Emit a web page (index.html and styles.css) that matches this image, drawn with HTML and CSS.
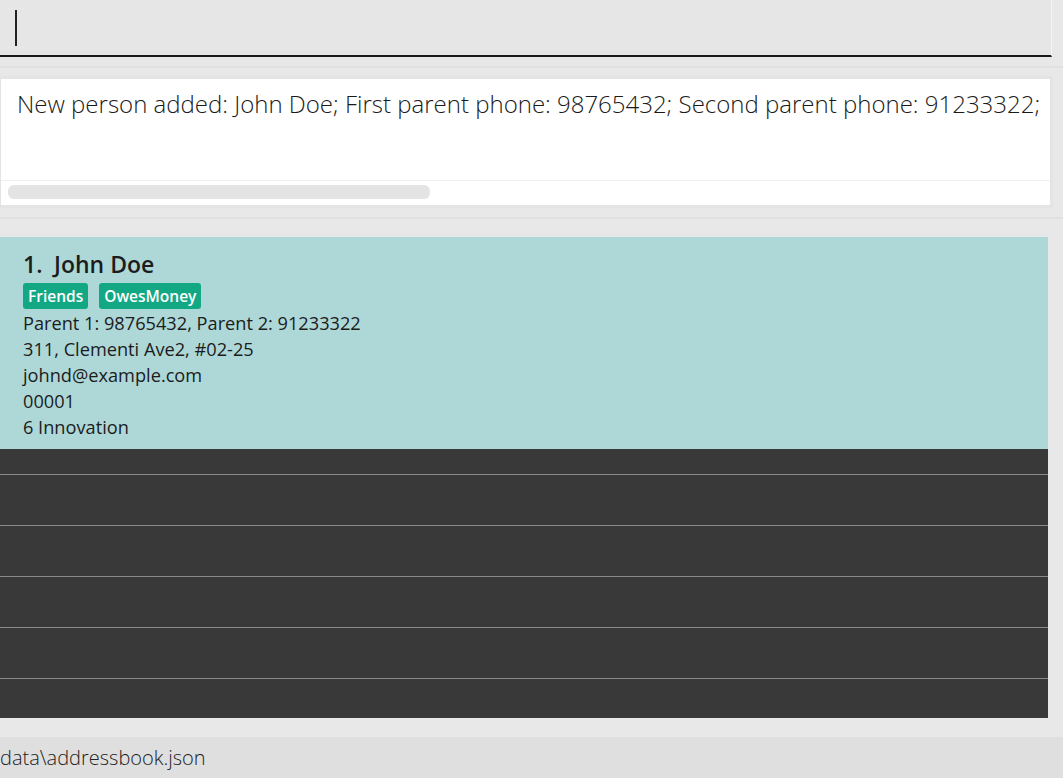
FILE: index.html
```html
<!DOCTYPE html>
<html>
<head>
<meta charset="utf-8">
<link rel="stylesheet" href="styles.css">
</head>
<body>
<div class="app">
  <div class="command-row">
    <div class="command-box"><span class="caret"></span></div>
  </div>
  <div class="sep"></div>
  <div class="result-wrap">
    <div class="result-box">
      <div class="result-text">New person added: John Doe; First parent phone: 98765432; Second parent phone: 91233322;</div>
      <div class="result-scroll"><div class="thumb"></div></div>
    </div>
  </div>
  <div class="sep sep-b"></div>
  <div class="list-wrap">
    <div class="list">
      <div class="card">
        <div class="name"><span class="idx">1.</span>John Doe</div>
        <div class="tags"><span class="tag">Friends</span><span class="tag">OwesMoney</span></div>
        <div class="line">Parent 1: 98765432, Parent 2: 91233322</div>
        <div class="line">311, Clementi Ave2, #02-25</div>
        <div class="line">johnd@example.com</div>
        <div class="line">00001</div>
        <div class="line">6 Innovation</div>
      </div>
      <div class="row first"></div>
      <div class="row"></div>
      <div class="row"></div>
      <div class="row"></div>
      <div class="row"></div>
      <div class="row last"></div>
    </div>
  </div>
  <div class="status">data\addressbook.json</div>
</div>
</body>
</html>
```
FILE: styles.css
```css
html, body {
  margin: 0;
  padding: 0;
  height: 100%;
  background: #e8e8e8;
}
.app {
  width: 1063px;
  height: 778px;
  display: flex;
  flex-direction: column;
  font-family: "Open Sans", "Noto Sans", sans-serif;
  overflow: hidden;
}
.app > * {
  flex-shrink: 0;
}
.command-row {
  height: 57px;
  padding-right: 11px;
  background: #e8e8e8;
}
.command-box {
  height: 55px;
  background: #e6e6e6;
  border-right: 1px solid #f4f4f4;
  border-bottom: 2px solid #1a1a1a;
  box-sizing: content-box;
  position: relative;
}
.caret {
  position: absolute;
  left: 15px;
  top: 10px;
  width: 2px;
  height: 36px;
  background: #222;
}
.sep {
  height: 19px;
  background: #e8e8e8;
  border-top: 9px solid #e8e8e8;
  box-sizing: border-box;
  position: relative;
}
.sep::after {
  content: "";
  position: absolute;
  left: 0;
  right: 0;
  top: 0;
  height: 2px;
  background: #e0e0e0;
}
.result-wrap {
  padding: 0 11px 0 0;
  height: 132px;
  box-sizing: border-box;
}
.result-box {
  height: 132px;
  box-sizing: border-box;
  border: 3px solid #e4e4e4;
  background: #ffffff;
  display: flex;
  flex-direction: column;
  margin-left: -2px;
  margin-right: -1px;
}
.result-text {
  height: 102px;
  box-sizing: border-box;
  padding: 8px 0 0 16px;
  font-weight: 300;
  font-size: 24px;
  color: #1a1a1a;
  white-space: nowrap;
  border-bottom: 1px solid #f0f0f0;
}
.result-scroll {
  flex: 1;
  padding: 4px 0 0 7px;
}
.thumb {
  width: 422px;
  height: 14px;
  border-radius: 6px;
  background: #e4e4e4;
}
.sep-b {
  height: 29px;
  border-top: 9px solid #e8e8e8;
}
.list-wrap {
  height: 481px;
  padding-right: 15px;
}
.list {
  height: 100%;
  background: #393939;
  display: flex;
  flex-direction: column;
}
.card {
  height: 212px;
  box-sizing: border-box;
  background: #aed8d8;
  padding: 13px 0 0 23px;
  color: #1c1c1c;
}
.name {
  font-weight: 600;
  font-size: 23px;
  line-height: 28px;
  display: flex;
}
.idx {
  width: 31px;
}
.tags {
  display: flex;
  gap: 11px;
  margin-top: 5px;
  margin-bottom: 1px;
}
.tag {
  background: #13a884;
  color: #ffffff;
  font-weight: 600;
  font-size: 15.5px;
  line-height: 26px;
  padding: 0 5px;
  border-radius: 3px;
}
.line {
  font-size: 18.2px;
  line-height: 26px;
}
.row {
  height: 51px;
  border-top: 1px solid #8a8a8a;
  box-sizing: border-box;
}
.row.first {
  height: 25px;
  border-top: none;
}
.row.last {
  flex: 1;
}
.status {
  margin-top: 19px;
  flex: 1;
  background: #dfdfdf;
  font-weight: 300;
  font-size: 20px;
  line-height: 40px;
  color: #222;
  border-top: 1px solid #e0e0e0;
}
```
